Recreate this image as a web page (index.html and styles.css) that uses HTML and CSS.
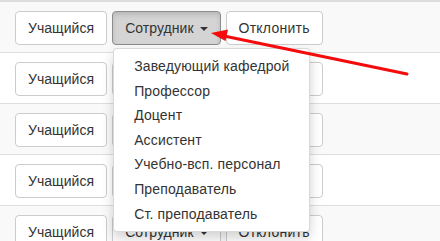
FILE: index.html
```html
<!DOCTYPE html>
<html lang="ru">
<head>
<meta charset="utf-8">
<link rel="stylesheet" href="styles.css">
</head>
<body>
<div class="table">
  <div class="row">
    <button class="btn">Учащийся</button>
    <div class="group">
      <button class="btn open">Сотрудник <span class="caret"></span></button>
      <ul class="menu">
        <li>Заведующий кафедрой</li>
        <li>Профессор</li>
        <li>Доцент</li>
        <li>Ассистент</li>
        <li>Учебно-всп. персонал</li>
        <li>Преподаватель</li>
        <li>Ст. преподаватель</li>
      </ul>
    </div>
    <button class="btn btn-wide">Отклонить</button>
  </div>
  <div class="row">
    <button class="btn">Учащийся</button>
    <div class="group"><button class="btn">Сотрудник <span class="caret"></span></button></div>
    <button class="btn btn-wide">Отклонить</button>
  </div>
  <div class="row">
    <button class="btn">Учащийся</button>
    <div class="group"><button class="btn">Сотрудник <span class="caret"></span></button></div>
    <button class="btn btn-wide">Отклонить</button>
  </div>
  <div class="row">
    <button class="btn">Учащийся</button>
    <div class="group"><button class="btn">Сотрудник <span class="caret"></span></button></div>
    <button class="btn btn-wide">Отклонить</button>
  </div>
  <div class="row">
    <button class="btn">Учащийся</button>
    <div class="group"><button class="btn">Сотрудник <span class="caret"></span></button></div>
    <button class="btn btn-wide">Отклонить</button>
  </div>
</div>
<svg class="arrow" width="440" height="241" viewBox="0 0 440 241">
  <line x1="407" y1="74" x2="224" y2="36" stroke="#f40b0b" stroke-width="3" stroke-linecap="round"/>
  <polygon points="211,33 228,29.5 225.5,41" fill="#f40b0b"/>
</svg>
</body>
</html>
```

FILE: styles.css
```css
html, body {
  margin: 0;
  padding: 0;
  background: #fff;
}

body {
  font-family: "Liberation Sans", Arial, Helvetica, sans-serif;
  font-size: 14px;
  letter-spacing: 0.05px;
  color: #333;
  position: relative;
  overflow: hidden;
  height: 241px;
}

.table {
  border-top: 2px solid #ddd;
}

.row {
  display: flex;
  align-items: flex-start;
  gap: 5px;
  padding: 9px 8px 7px 15px;
  border-top: 1px solid #ddd;
}

.row:first-child {
  border-top: 0;
}

.row:nth-child(odd) {
  background: #f9f9f9;
}

.btn {
  box-sizing: border-box;
  height: 34px;
  margin: 0;
  padding: 6px 12px;
  font-family: inherit;
  font-size: 14px;
  letter-spacing: inherit;
  line-height: 20px;
  color: #333;
  background: #fff;
  border: 1px solid #ccc;
  border-radius: 4px;
  white-space: nowrap;
}

.btn-wide {
  letter-spacing: 0.25px;
}

.btn.open {
  background: #d4d4d4;
  border-color: #8c8c8c;
  box-shadow: inset 0 3px 5px rgba(0, 0, 0, 0.125);
}

.caret {
  display: inline-block;
  width: 0;
  height: 0;
  margin-left: 2px;
  vertical-align: middle;
  border-top: 4px solid;
  border-left: 4px solid transparent;
  border-right: 4px solid transparent;
}

.group {
  position: relative;
}

.menu {
  position: absolute;
  top: 100%;
  left: 1px;
  z-index: 10;
  margin: 3px 0 0;
  padding: 5px 0;
  list-style: none;
  min-width: 160px;
  background: #fff;
  border: 1px solid rgba(0, 0, 0, 0.15);
  border-radius: 4px;
  box-shadow: 0 6px 12px rgba(0, 0, 0, 0.175);
  white-space: nowrap;
  letter-spacing: 0.15px;
}

.menu li {
  padding: 3px 20px;
  line-height: 18.6px;
  color: #333;
}

.arrow {
  position: absolute;
  top: 0;
  left: 0;
  z-index: 20;
  pointer-events: none;
}
```
